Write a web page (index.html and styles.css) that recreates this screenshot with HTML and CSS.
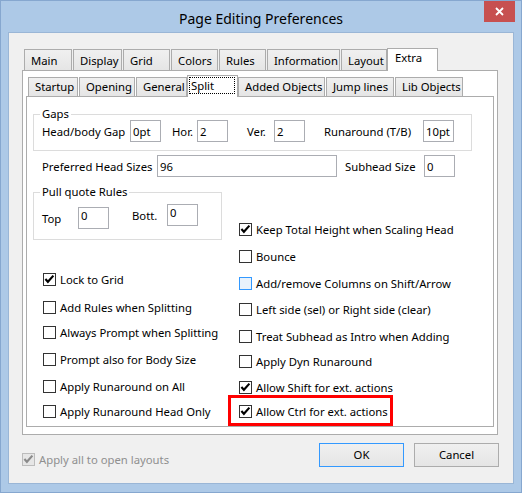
FILE: index.html
```html
<!DOCTYPE html>
<html>
<head>
<meta charset="utf-8">
<title>Page Editing Preferences</title>
<link rel="stylesheet" href="styles.css">
</head>
<body>
<div class="window">
  <div class="titlebar">
    <div class="title">Page Editing Preferences</div>
    <div class="close"><svg viewBox="0 0 9 9" width="9" height="9"><path d="M1 1 L8 8 M8 1 L1 8"/></svg></div>
  </div>
  <div class="client">
    <div class="tabctl">
      <div class="tabrow row1">
        <div class="tab t-main">Main</div>
        <div class="tab t-display">Display</div>
        <div class="tab t-grid">Grid</div>
        <div class="tab t-colors">Colors</div>
        <div class="tab t-rules">Rules</div>
        <div class="tab t-info">Information</div>
        <div class="tab t-layout">Layout</div>
        <div class="tab sel t-extra">Extra</div>
      </div>
      <div class="panel outer">
        <div class="tabrow row2">
          <div class="tab t-startup">Startup</div>
          <div class="tab t-opening">Opening</div>
          <div class="tab t-general">General</div>
          <div class="tab sel t-split"><span class="focus">Split</span></div>
          <div class="tab t-added">Added Objects</div>
          <div class="tab t-jump">Jump lines</div>
          <div class="tab t-lib">Lib Objects</div>
        </div>
        <div class="panel inner">
          <fieldset class="group gaps">
            <legend>Gaps</legend>
            <div class="frow">
              <span class="lbl g-hb">Head/body Gap</span>
              <span class="inp">0pt</span>
              <span class="lbl g-hor">Hor.</span>
              <span class="inp">2</span>
              <span class="lbl g-ver">Ver.</span>
              <span class="inp">2</span>
              <span class="lbl g-run">Runaround (T/B)</span>
              <span class="inp">10pt</span>
            </div>
          </fieldset>
          <div class="frow pref">
            <span class="lbl p-head">Preferred Head Sizes</span>
            <span class="inp wide">96</span>
            <span class="lbl p-sub">Subhead Size</span>
            <span class="inp">0</span>
          </div>
          <div class="cols">
            <div class="col-left">
              <fieldset class="group pq">
                <legend>Pull quote Rules</legend>
                <div class="pq-row">
                  <div class="pair pair-top">
                    <span class="lbl q-top">Top</span>
                    <span class="inp flat">0</span>
                  </div>
                  <div class="pair pair-bott">
                    <span class="lbl q-bott">Bott.</span>
                    <span class="inp flat">0</span>
                  </div>
                </div>
              </fieldset>
              <div class="cblist left-list">
                <div class="cb"><span class="box"><svg viewBox="0 0 11 11"><path d="M1.4 5 L3.9 7.8 L9.4 1.6"/></svg></span>Lock to Grid</div>
                <div class="cb"><span class="box"></span>Add Rules when Splitting</div>
                <div class="cb"><span class="box"></span>Always Prompt when Splitting</div>
                <div class="cb"><span class="box"></span>Prompt also for Body Size</div>
                <div class="cb"><span class="box"></span>Apply Runaround on All</div>
                <div class="cb"><span class="box"></span>Apply Runaround Head Only</div>
              </div>
            </div>
            <div class="cblist right-list">
              <div class="cb"><span class="box"><svg viewBox="0 0 11 11"><path d="M1.4 5 L3.9 7.8 L9.4 1.6"/></svg></span>Keep Total Height when Scaling Head</div>
              <div class="cb"><span class="box"></span>Bounce</div>
              <div class="cb"><span class="box hot"></span>Add/remove Columns on Shift/Arrow</div>
              <div class="cb"><span class="box"></span>Left side (sel) or Right side (clear)</div>
              <div class="cb"><span class="box"></span>Treat Subhead as Intro when Adding</div>
              <div class="cb"><span class="box"></span>Apply Dyn Runaround</div>
              <div class="cb"><span class="box"><svg viewBox="0 0 11 11"><path d="M1.4 5 L3.9 7.8 L9.4 1.6"/></svg></span>Allow Shift for ext. actions</div>
              <div class="cb"><span class="box"><svg viewBox="0 0 11 11"><path d="M1.4 5 L3.9 7.8 L9.4 1.6"/></svg></span>Allow Ctrl for ext. actions</div>
            </div>
          </div>
          <div class="highlight"></div>
        </div>
      </div>
    </div>
    <div class="footer">
      <div class="cb disabled"><span class="box"><svg viewBox="0 0 11 11"><path d="M1.4 5 L3.9 7.8 L9.4 1.6"/></svg></span>Apply all to open layouts</div>
      <div class="btn default">OK</div>
      <div class="btn">Cancel</div>
    </div>
  </div>
</div>
</body>
</html>
```
FILE: styles.css
```css
* { box-sizing: border-box; }
html, body { margin: 0; padding: 0; }
body {
  width: 522px;
  height: 493px;
  overflow: hidden;
  font-family: "Segoe UI", "Noto Sans", "Liberation Sans", sans-serif;
  font-size: 11.3px;
  line-height: 15px;
  color: #000;
}

/* window frame */
.window {
  position: relative;
  width: 522px;
  height: 493px;
  background: #adc9e7;
  border: 1px solid #86a7cf;
  padding: 0 7px 8px 7px;
  display: flex;
  flex-direction: column;
}
.titlebar {
  height: 31px;
  flex: none;
}
.title {
  text-align: center;
  font-size: 14px;
  line-height: 20px;
  padding-top: 8px;
  color: #000;
}
.close {
  position: absolute;
  top: 0;
  right: 6px;
  width: 31px;
  height: 21px;
  background: #c75050;
  display: flex;
  align-items: center;
  justify-content: center;
}
.close svg { display: block; }
.close path { stroke: #fff; stroke-width: 1.8; fill: none; }

.client {
  flex: 1;
  background: #f0f0f0;
  border: 1px solid #9ab6d6;
  display: flex;
  flex-direction: column;
}

/* tab controls */
.tabctl {
  margin: 15px 0 0 13px;
  width: 476px;
}
.tabrow {
  display: flex;
  align-items: flex-end;
  padding-left: 2px;
}
.tab {
  border: 1px solid #acacac;
  border-bottom: none;
  background: linear-gradient(#f0f0f0, #e5e5e5);
  padding-left: 6px;
  white-space: nowrap;
  margin-left: 1px;
  flex: none;
}
.tab:first-child { margin-left: 0; }
.tab.sel, .tab.sel + .tab { margin-left: 0; }
.tab.sel {
  background: #fff;
  position: relative;
  z-index: 1;
  margin-bottom: -1px;
}
.row1 .tab { height: 21px; padding-top: 3px; }
.row1 .tab.sel { height: 23px; padding-top: 1px; padding-left: 7px; }
.row2 .tab { height: 19px; padding-top: 1px; }
.row2 .tab.sel { height: 22px; padding: 1px; }

.t-main { width: 48px; }
.t-display { width: 49px; }
.t-grid { width: 47px; }
.t-colors { width: 47px; }
.t-rules { width: 47px; }
.t-info { width: 73px; }
.t-layout { width: 46px; }
.t-extra { width: 51px; }

.t-startup { width: 50px; }
.t-opening { width: 56px; }
.t-general { width: 51px; }
.t-split { width: 51px; }
.t-added { width: 87px; }
.t-jump { width: 68px; }
.t-lib { width: 68px; }

.focus {
  display: block;
  width: 46px;
  height: 17px;
  border: 1px dotted #000;
  padding-left: 1px;
}

.panel {
  border: 1px solid #acacac;
  background: #fff;
}
.panel.outer {
  height: 365px;
  padding: 4px 3px 7px 3px;
}
.panel.inner {
  position: relative;
  height: 331px;
}

/* group boxes */
.group {
  border: 1px solid #dcdcdc;
  margin: 0;
  min-width: 0;
}
.group legend {
  padding: 0 2px;
  margin-left: -2px;
  line-height: 12px;
}
.gaps {
  margin: 11px 0 0 6px;
  width: 439px;
  padding: 0 8px 8px 8px;
}
.pq {
  margin-top: 9px;
  width: 189px;
  padding: 6px 8px 10px 8px;
}

.frow {
  display: flex;
  align-items: baseline;
}
.lbl {
  flex: none;
  white-space: nowrap;
}
.inp {
  flex: none;
  display: block;
  width: 31px;
  height: 22px;
  border: 1px solid #abadb3;
  background: #fff;
  padding: 3px 2px 0 2px;
  white-space: nowrap;
  overflow: hidden;
}
.inp.wide { width: 180px; }
.inp.flat { padding-top: 0; }

.g-hb { width: 88px; }
.g-hor { width: 25px; margin-left: 11px; }
.g-ver { width: 27px; margin-left: 19px; }
.g-run { width: 99px; margin-left: 19px; }

.pref { margin: 4px 0 0 15px; }
.p-head { width: 115px; }
.p-sub { width: 79px; margin-left: 8px; }

.cols {
  display: grid;
  grid-template-columns: 206px auto;
  margin-left: 6px;
}
.pq-row {
  display: flex;
  align-items: flex-start;
}
.pair {
  display: flex;
  align-items: center;
}
.pair-top { margin-top: 3px; }
.pair-bott { margin-left: 23px; }
.q-top { width: 36px; }
.q-bott { width: 35px; }

/* checkboxes */
.cblist { display: flex; flex-direction: column; }
.left-list { margin-top: 32px; padding-left: 10px; }
.right-list { margin-top: 45px; }
.cb {
  display: flex;
  align-items: center;
  height: 15px;
  white-space: nowrap;
}
.box {
  flex: none;
  width: 13px;
  height: 13px;
  border: 1px solid #333;
  background: #fff;
  margin-right: 4px;
}
.box svg { display: block; width: 11px; height: 11px; }
.box path { fill: none; stroke: #000; stroke-width: 2.1; stroke-linejoin: miter; }
.box.hot { border-color: #3399ff; background: #e8f2fc; }

.left-list .cb + .cb { margin-top: 12px; }
.left-list .cb:nth-child(2) { margin-top: 13px; }
.left-list .cb:nth-child(3) { margin-top: 10px; }
.left-list .cb:nth-child(6) { margin-top: 10px; }

.right-list .cb + .cb { margin-top: 11px; }
.right-list .cb:nth-child(2) { margin-top: 12px; }
.right-list .cb:nth-child(3) { margin-top: 12px; }
.right-list .cb:nth-child(5) { margin-top: 12px; }
.right-list .cb:nth-child(6) { margin-top: 10px; }
.right-list .cb:nth-child(8) { margin-top: 9px; }

.highlight {
  position: absolute;
  left: 201px;
  top: 298px;
  width: 165px;
  height: 31px;
  border: 3px solid #ff0000;
}

/* footer */
.footer {
  display: flex;
  align-items: flex-start;
  margin-top: 8px;
  padding: 0 14px 0 13px;
}
.cb.disabled { margin-top: 9px; color: #8f8f8f; }
.cb.disabled .box { border-color: #bcbcbc; background: #e6e6e6; }
.cb.disabled .box path { stroke: #8a8a8a; }
.btn {
  width: 85px;
  height: 24px;
  border: 1px solid #acacac;
  background: linear-gradient(#f0f0f0, #e5e5e5);
  text-align: center;
  line-height: 22px;
}
.btn.default { margin-left: auto; border-color: #3399ff; }
.btn + .btn { margin-left: 10px; }
```
